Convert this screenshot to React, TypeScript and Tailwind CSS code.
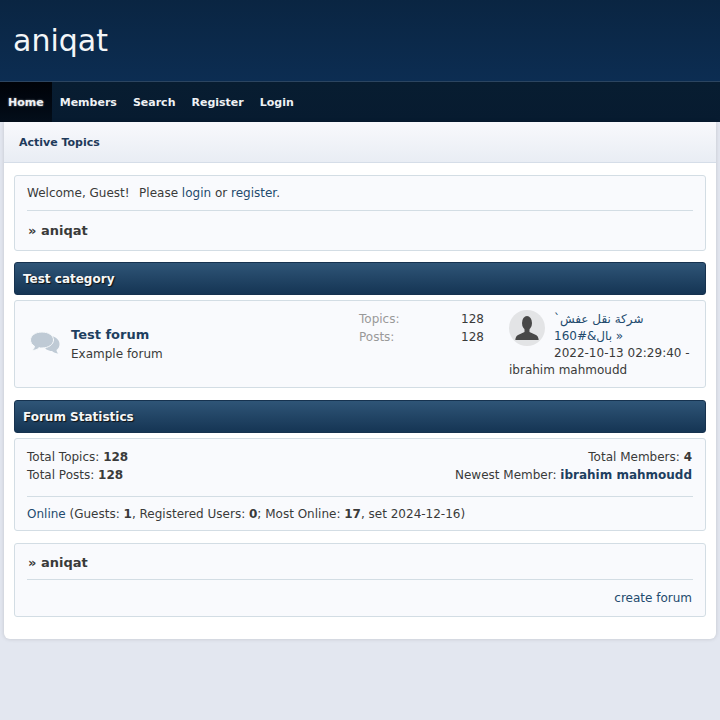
import React from 'react';

const navItems = ['Home', 'Members', 'Search', 'Register', 'Login'];

const CategoryHead: React.FC<{ title: string }> = ({ title }) => (
  <div className="h-[33px] rounded-[3px] border border-[#16324f] bg-gradient-to-b from-[#2f5577] to-[#153554] pl-2 text-[12px] leading-[32px] font-bold text-[#f6f7f8] [text-shadow:1px_1px_1px_#111]">
    {title}
  </div>
);

const ChatIcon = () => (
  <svg width="30" height="26" viewBox="0 0 30 26">
    <path d="M19 6c6 0 10.500 3.500 10.500 8 0 2.500-1 4.500-3 6 0 1.500 1 3 2 3.500-2.500 0-5-1-6.500-2.500-4 0-8-2-8-7S14 6 19 6z" fill="#bfcad5" />
    <path d="M12 2c6.500 0 11.500 3.500 11.500 8S18.500 18 12 18c-1 0-2 0-3-.3C7.500 19.500 4.500 20.500 2 20.500c1.300-1 2.300-2.500 2.500-4.300C2 14.800.5 12.500.5 10 .5 5.500 5.500 2 12 2z" fill="#bfcad5" stroke="#f8fafc" strokeWidth="1" />
  </svg>
);

const Avatar = () => (
  <div className="float-left mt-[-1px] mr-[9px] mb-[2px] h-9 w-9 overflow-hidden rounded-full bg-[#e3e4e6]">
    <svg width="36" height="36" viewBox="0 0 36 36">
      <ellipse cx="18" cy="13" rx="5" ry="7" fill="#484848" />
      <path d="M15.500 18h5v4l6.500 3c1.500.8 2.500 2.500 2.700 5H6.300c.2-2.500 1.200-4.200 2.700-5l6.500-3z" fill="#484848" />
    </svg>
  </div>
);

const App: React.FC = () => {
  return (
    <div className="min-h-[720px] bg-[#e3e7f0] font-['DejaVu_Sans',sans-serif] text-[12px] leading-[18px] text-[#3a3a3a]">
      <header className="h-[82px] border-b border-[#2c4560] bg-gradient-to-b from-[#0a2542] to-[#0c2d52] pt-[23px] pl-[13px] text-[30px] leading-[36px] text-[#f4f6f8]">
        aniqat
      </header>

      <nav className="flex h-10 bg-gradient-to-b from-[#081d31] to-[#071b30] text-[11px] font-bold text-[#eef1f4]">
        {navItems.map((item, i) => (
          <a
            key={item}
            className={
              i === 0
                ? 'bg-gradient-to-b from-[#000308] to-[#030e1a] px-2 leading-[41px] [text-shadow:0_0_2px_#8a8f96]'
                : 'px-2 leading-[41px]'
            }
          >
            {item}
          </a>
        ))}
      </nav>

      <main className="mx-1 h-[517px] rounded-b-md bg-white shadow-[0_0_4px_rgba(0,0,0,0.15)]">
        <div className="h-[41px] border-b border-[#d5dde8] bg-gradient-to-b from-[#f8f9fc] to-[#e9edf4] pl-[15px] text-[11px] leading-[41px] font-bold text-[#1e3a5a]">
          Active Topics
        </div>

        <div className="flex flex-col px-[10px] pt-3">
          <section className="h-[76px] rounded-[3px] border border-[#d3dde4] bg-[#f9fafd] px-3 pt-2">
            <p>
              Welcome, Guest!<span className="ml-[9.500px]">Please</span> <a className="text-[#234a6e]">login</a> or <a className="text-[#234a6e]">register</a>.
            </p>
            <div className="mt-[8px] border-t border-[#d3dde4] pt-[11px] pl-[1px] text-[13px] font-bold">» aniqat</div>
          </section>

          <div className="mt-[11px]">
            <CategoryHead title="Test category" />
          </div>

          <section className="mt-[5px] flex h-[88px] rounded-[3px] border border-[#d3dde4] bg-[#f9fafd] pt-[9px]">
            <div className="mt-[20px] ml-[15px] w-[41px] shrink-0">
              <ChatIcon />
            </div>
            <div className="w-[288px] shrink-0 pt-[16px]">
              <div className="text-[13px] leading-[18px] font-bold text-[#1e3f60]">Test forum</div>
              <div className="mt-[1px]">Example forum</div>
            </div>
            <div className="w-[125px] shrink-0">
              <div className="flex justify-between"><span className="text-[#999]">Topics:</span><span>128</span></div>
              <div className="flex justify-between"><span className="text-[#999]">Posts:</span><span>128</span></div>
            </div>
            <div className="ml-[25px] w-[186px] pt-[1px] leading-[17px]">
              <Avatar />
              <a className="text-[#234a6e]">شركة نقل عفش` بال&amp;#160 »</a>
              <br />
              2022-10-13 02:29:40 - ibrahim mahmoudd
            </div>
          </section>

          <div className="mt-[12px]">
            <CategoryHead title="Forum Statistics" />
          </div>

          <section className="mt-[5px] h-[93px] rounded-[3px] border border-[#d3dde4] bg-[#f9fafd] px-3 pt-[9px]">
            <div className="flex justify-between pr-[1px] pb-[12px]">
              <div>
                <div>Total Topics: <b>128</b></div>
                <div>Total Posts: <b>128</b></div>
              </div>
              <div className="text-right">
                <div>Total Members: <b>4</b></div>
                <div>Newest Member: <b className="text-[#1e3f60]">ibrahim mahmoudd</b></div>
              </div>
            </div>
            <div className="border-t border-[#d3dde4] pt-[8px]">
              <a className="text-[#234a6e]">Online</a> (Guests: <b>1</b>, Registered Users: <b>0</b>; Most Online: <b>17</b>, set 2024-12-16)
            </div>
          </section>

          <section className="mt-[12px] h-[74px] rounded-[3px] border border-[#d3dde4] bg-[#f9fafd] px-3 pt-[10px]">
            <div className="pl-[1px] text-[13px] font-bold">» aniqat</div>
            <div className="mt-[7px] border-t border-[#d3dde4] pt-[9px] pr-[1px] text-right">
              <a className="text-[#234a6e]">create forum</a>
            </div>
          </section>
        </div>
      </main>
    </div>
  );
};

export default App;
